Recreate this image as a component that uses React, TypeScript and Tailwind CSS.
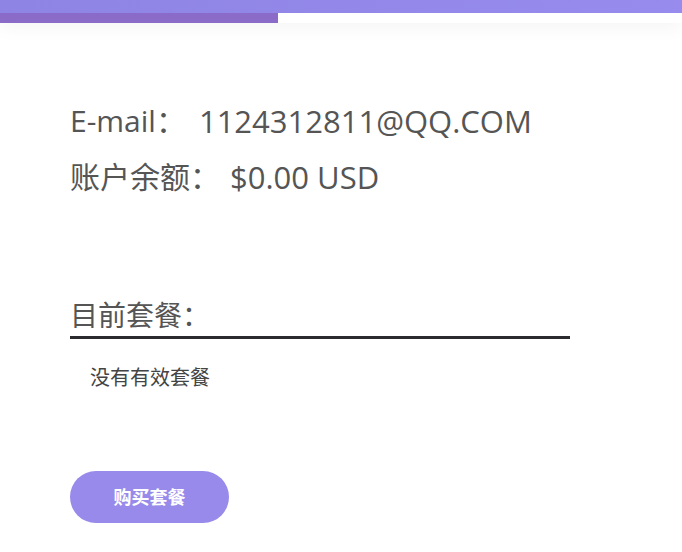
export default function App() {
  return (
    <div className="min-h-[552px] w-full bg-white font-['Open_Sans','Noto_Sans_CJK_SC',sans-serif] text-[#555555]">
      <div className="shadow-[0_6px_18px_rgba(0,0,0,0.04)]">
        <div className="h-[13px] bg-gradient-to-r from-[#8e84e3] to-[#978cee]" />
        <div className="h-[10px] w-[278px] bg-[#8b6bc8]" />
      </div>

      <div className="pl-[70px] pt-[76px]">
        <div className="flex h-[44px] items-center text-[30px] leading-none">
          <span>E-mail：</span>
          <span className="ml-[13px] text-[31px]">1124312811@QQ.COM</span>
        </div>
        <div className="mt-[12px] flex h-[44px] items-center text-[30px] leading-none">
          <span>账户余额：</span>
          <span className="ml-[10px] text-[31px]">$0.00 USD</span>
        </div>

        <div className="mt-[99px] w-[500px] border-b-[3px] border-[#2b2a2e] pb-[4px] text-[28px] leading-[34px]">
          目前套餐：
        </div>
        <p className="mt-[25px] pl-[20px] text-[20px] leading-[28px] text-[#444444]">没有有效套餐</p>

        <button className="mt-[79px] flex h-[52px] w-[159px] items-center justify-center rounded-full bg-[#978aea] text-[18px] font-bold text-white">
          购买套餐
        </button>
      </div>
    </div>
  );
}
